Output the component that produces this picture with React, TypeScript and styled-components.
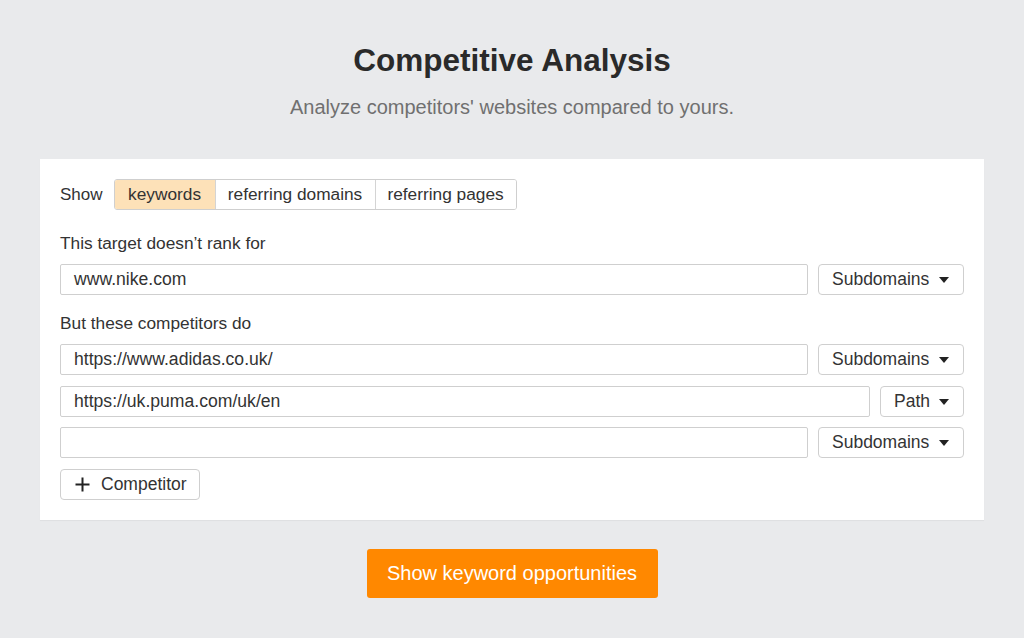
import React from "react";
import styled, { createGlobalStyle } from "styled-components";

const Global = createGlobalStyle`
  html, body { margin: 0; padding: 0; }
  body {
    background: #e9eaec;
    font-family: "Liberation Sans", Arial, Helvetica, sans-serif;
    color: #333;
  }
  * { box-sizing: border-box; }
`;

const Page = styled.div`
  width: 1024px;
  min-height: 638px;
  padding: 42px 40px 40px;
  display: flex;
  flex-direction: column;
  align-items: center;
`;

const Title = styled.h1`
  margin: 0;
  font-size: 31.5px;
  line-height: 36px;
  font-weight: 700;
  color: #2a2a2a;
`;

const Subtitle = styled.p`
  margin: 17px 0 40px;
  font-size: 20px;
  line-height: 24px;
  color: #707070;
`;

const Card = styled.div`
  align-self: stretch;
  background: #fff;
  padding: 20px 20px 20px;
  display: flex;
  flex-direction: column;
  box-shadow: 0 1px 1px rgba(0, 0, 0, 0.04);
`;

const ShowRow = styled.div`
  display: flex;
  align-items: center;
  gap: 11px;
`;

const ShowLabel = styled.span`
  font-size: 17px;
`;

const Tabs = styled.div`
  display: flex;
  height: 31px;
  border: 1px solid #cfcfcf;
  border-radius: 3px;
  overflow: hidden;
`;

const Tab = styled.button<{ $active?: boolean; $w: number }>`
  width: ${(p) => p.$w}px;
  font-family: inherit;
  font-size: 17.3px;
  color: #333;
  border: none;
  border-left: ${(p) => (p.$active ? "none" : "1px solid #d4d4d4")};
  background: ${(p) => (p.$active ? "#fde1b8" : "#fff")};
  padding: 0;
  height: 100%;
  &:first-child { border-left: none; }
`;

const Label = styled.div<{ $top: number }>`
  margin-top: ${(p) => p.$top}px;
  margin-bottom: 10px;
  font-size: 17.3px;
  line-height: 22px;
`;

const Rows = styled.div`
  display: flex;
  flex-direction: column;
  gap: 10.5px;
`;

const Row = styled.div`
  display: flex;
  gap: 10px;
  height: 31px;
`;

const Input = styled.div`
  flex: 1;
  border: 1px solid #cfcfcf;
  border-radius: 2px;
  display: flex;
  align-items: center;
  padding: 0 13px;
  font-size: 17.6px;
  color: #333;
`;

const Select = styled.div<{ $w: number }>`
  width: ${(p) => p.$w}px;
  border: 1px solid #cfcfcf;
  border-radius: 4px;
  display: flex;
  align-items: center;
  justify-content: space-between;
  padding: 0 14px 0 13px;
  font-size: 17.5px;
  color: #333;
`;

const Caret = styled.span`
  width: 0;
  height: 0;
  border-left: 5px solid transparent;
  border-right: 5px solid transparent;
  border-top: 6px solid #222;
  margin-top: 1px;
`;

const AddButton = styled.button`
  align-self: flex-start;
  width: 140px;
  height: 31px;
  padding: 0 0 0 14px;
  border: 1px solid #cfcfcf;
  border-radius: 4px;
  background: #fff;
  display: flex;
  align-items: center;
  gap: 11px;
  font-family: inherit;
  font-size: 17.5px;
  color: #333;
`;

const Submit = styled.button`
  margin-top: 29px;
  width: 291px;
  height: 49px;
  border: none;
  border-radius: 3px;
  background: #ff8800;
  color: #fff;
  font-family: inherit;
  font-size: 20px;
`;

type R = { url: string; mode: string; w: number };
const rows: R[] = [
  { url: "https://www.adidas.co.uk/", mode: "Subdomains", w: 146 },
  { url: "https://uk.puma.com/uk/en", mode: "Path", w: 84 },
  { url: "", mode: "Subdomains", w: 146 },
];

export default function App() {
  return (
    <>
      <Global />
      <Page>
        <Title>Competitive Analysis</Title>
        <Subtitle>Analyze competitors' websites compared to yours.</Subtitle>
        <Card>
          <ShowRow>
            <ShowLabel>Show</ShowLabel>
            <Tabs>
              <Tab $active $w={100}>keywords</Tab>
              <Tab $w={160}>referring domains</Tab>
              <Tab $w={141}>referring pages</Tab>
            </Tabs>
          </ShowRow>
          <Label $top={22}>This target doesn’t rank for</Label>
          <Row>
            <Input>www.nike.com</Input>
            <Select $w={146}>
              Subdomains <Caret />
            </Select>
          </Row>
          <Label $top={17}>But these competitors do</Label>
          <Rows>
            {rows.map((r, i) => (
              <Row key={i}>
                <Input>{r.url}</Input>
                <Select $w={r.w}>
                  {r.mode} <Caret />
                </Select>
              </Row>
            ))}
            <AddButton>
              <svg width="15" height="15" viewBox="0 0 15 15">
                <path d="M7.5 0.5v14M0.5 7.5h14" stroke="#222" strokeWidth="2" />
              </svg>
              Competitor
            </AddButton>
          </Rows>
        </Card>
        <Submit>Show keyword opportunities</Submit>
      </Page>
    </>
  );
}
